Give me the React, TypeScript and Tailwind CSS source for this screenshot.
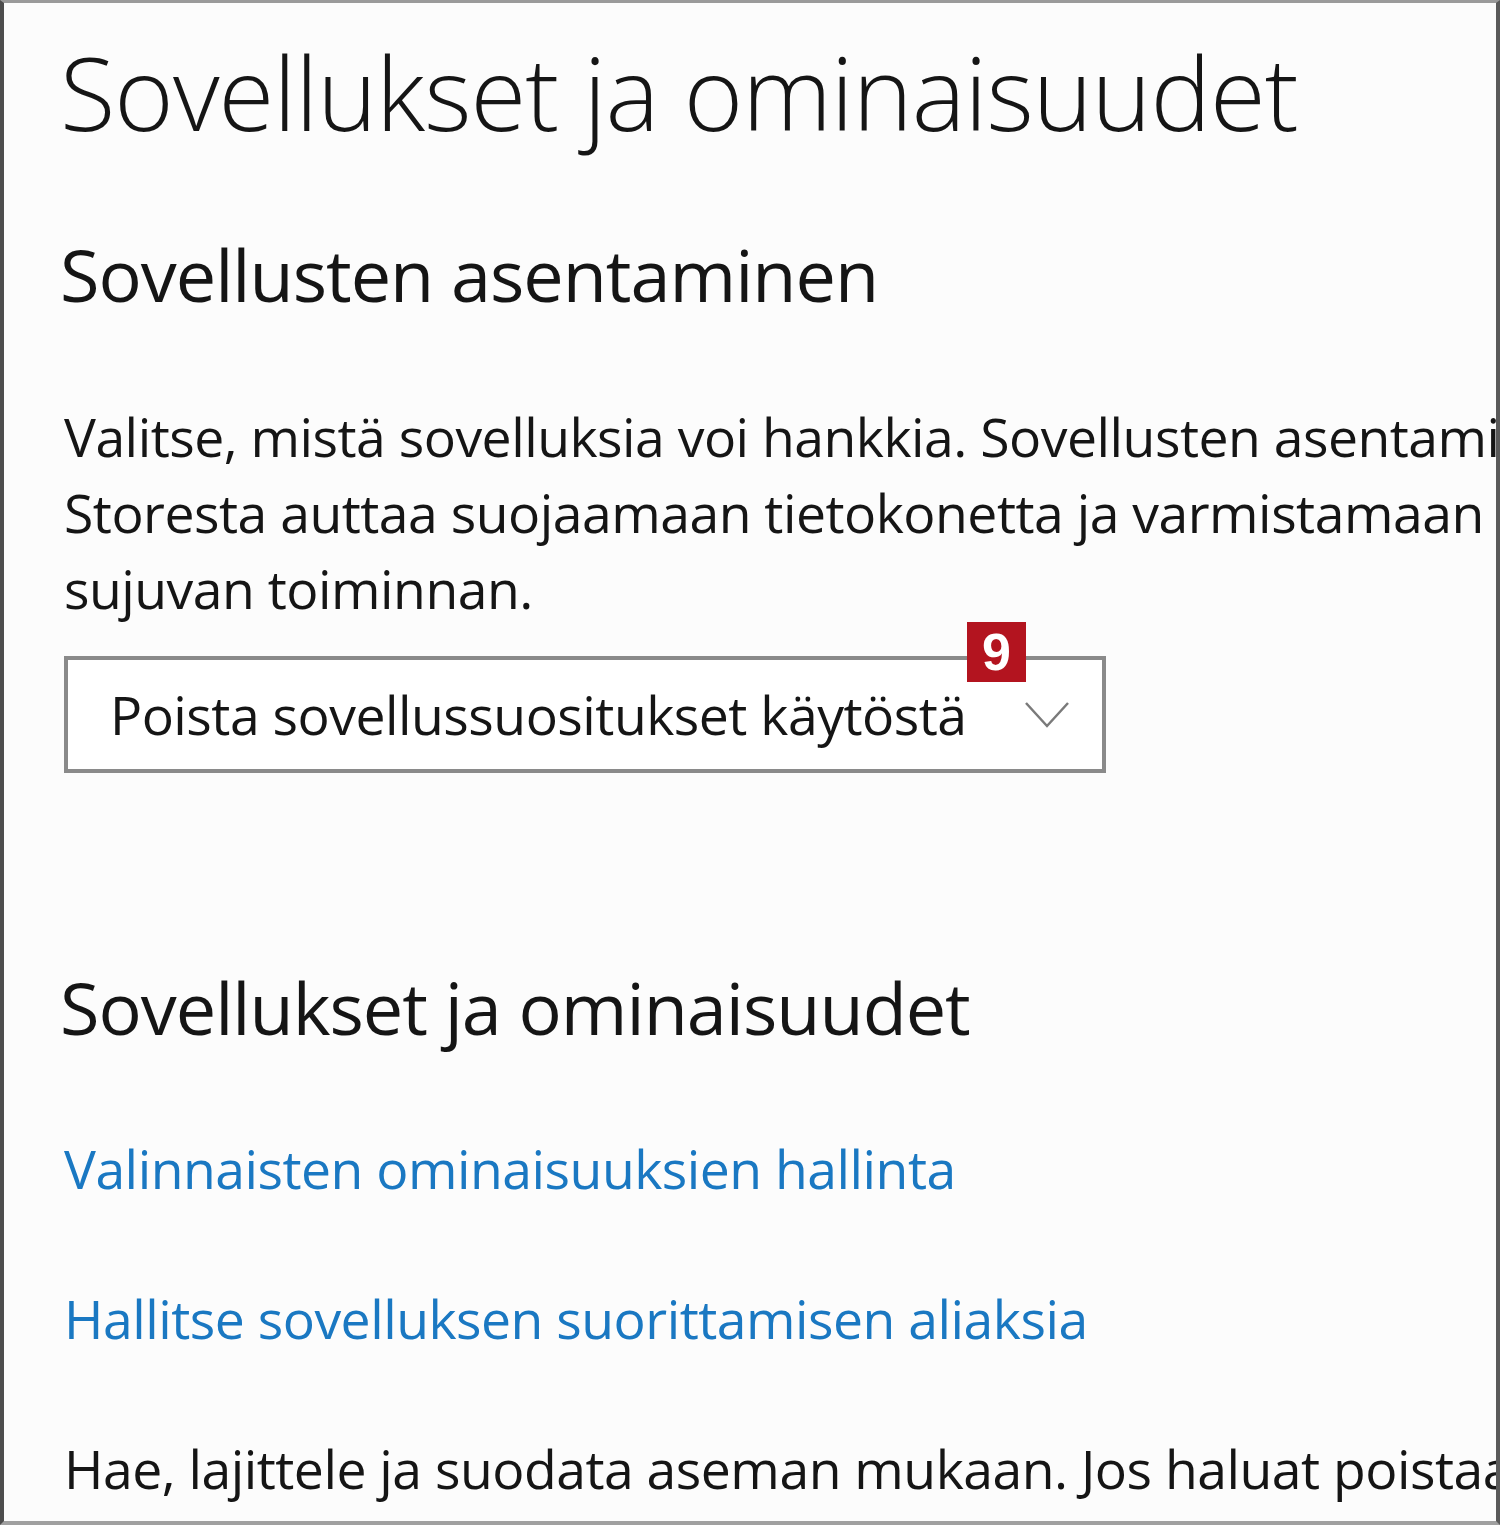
export default function App() {
  return (
    <div className="w-[1500px] h-[1525px] overflow-hidden bg-[#fcfcfc] border-l-[4px] border-l-[#4d4d4d] border-t-[3px] border-t-[#9a9a9a] border-r-[4px] border-r-[#5a5a5a] border-b-[4px] border-b-[#a0a0a0] font-['Open_Sans','Noto_Sans',sans-serif] text-[#151515]">
      <div className="pl-[56px] pt-[19px] whitespace-nowrap">
        <h1 className="text-[101.5px] leading-[140px] font-light tracking-[-1px]">
          Sovellukset ja ominaisuudet
        </h1>

        <h2 className="mt-[62px] text-[72px] leading-[100px] font-normal tracking-[-1px]">
          Sovellusten asentaminen
        </h2>

        <div className="mt-[75px] pl-[4px] text-[53.5px] leading-[76px] tracking-[-0.5px]">
          <p>Valitse, mistä sovelluksia voi hankkia. Sovellusten asentaminen vain</p>
          <p>Storesta auttaa suojaamaan tietokonetta ja varmistamaan sen</p>
          <p>sujuvan toiminnan.</p>
        </div>

        <div className="relative mt-[29px] ml-[4px] w-[1042px] h-[117px] border-[4px] border-[#8a8a8a] bg-white flex items-center pl-[42px] pr-[32px]">
          <span className="text-[53.5px] tracking-[-0.5px] mt-[2px]">Poista sovellussuositukset käytöstä</span>
          <svg className="ml-auto" width="46" height="28" viewBox="0 0 46 28" fill="none">
            <path d="M2 2 L23 25 L44 2" stroke="#7a7a7a" strokeWidth="2.5" />
          </svg>
          <div className="absolute left-[899px] top-[-38px] w-[59px] h-[60px] bg-[#b3141f] flex items-center justify-center">
            <span className="text-white text-[52px] font-bold font-['Liberation_Sans',sans-serif] leading-none">9</span>
          </div>
        </div>

        <h2 className="mt-[184px] text-[72px] leading-[100px] font-normal tracking-[-1px]">
          Sovellukset ja ominaisuudet
        </h2>

        <div className="pl-[4px] text-[53.5px] tracking-[-0.5px] text-[#1a78c2]">
          <p className="mt-[74px] leading-[76px]">Valinnaisten ominaisuuksien hallinta</p>
          <p className="mt-[74px] leading-[76px]">Hallitse sovelluksen suorittamisen aliaksia</p>
        </div>

        <p className="mt-[74px] pl-[4px] text-[53.5px] leading-[76px] tracking-[-0.5px]">
          Hae, lajittele ja suodata aseman mukaan. Jos haluat poistaa tai siirtää sovelluksen, valitse se luettelosta.
        </p>
      </div>
    </div>
  );
}
